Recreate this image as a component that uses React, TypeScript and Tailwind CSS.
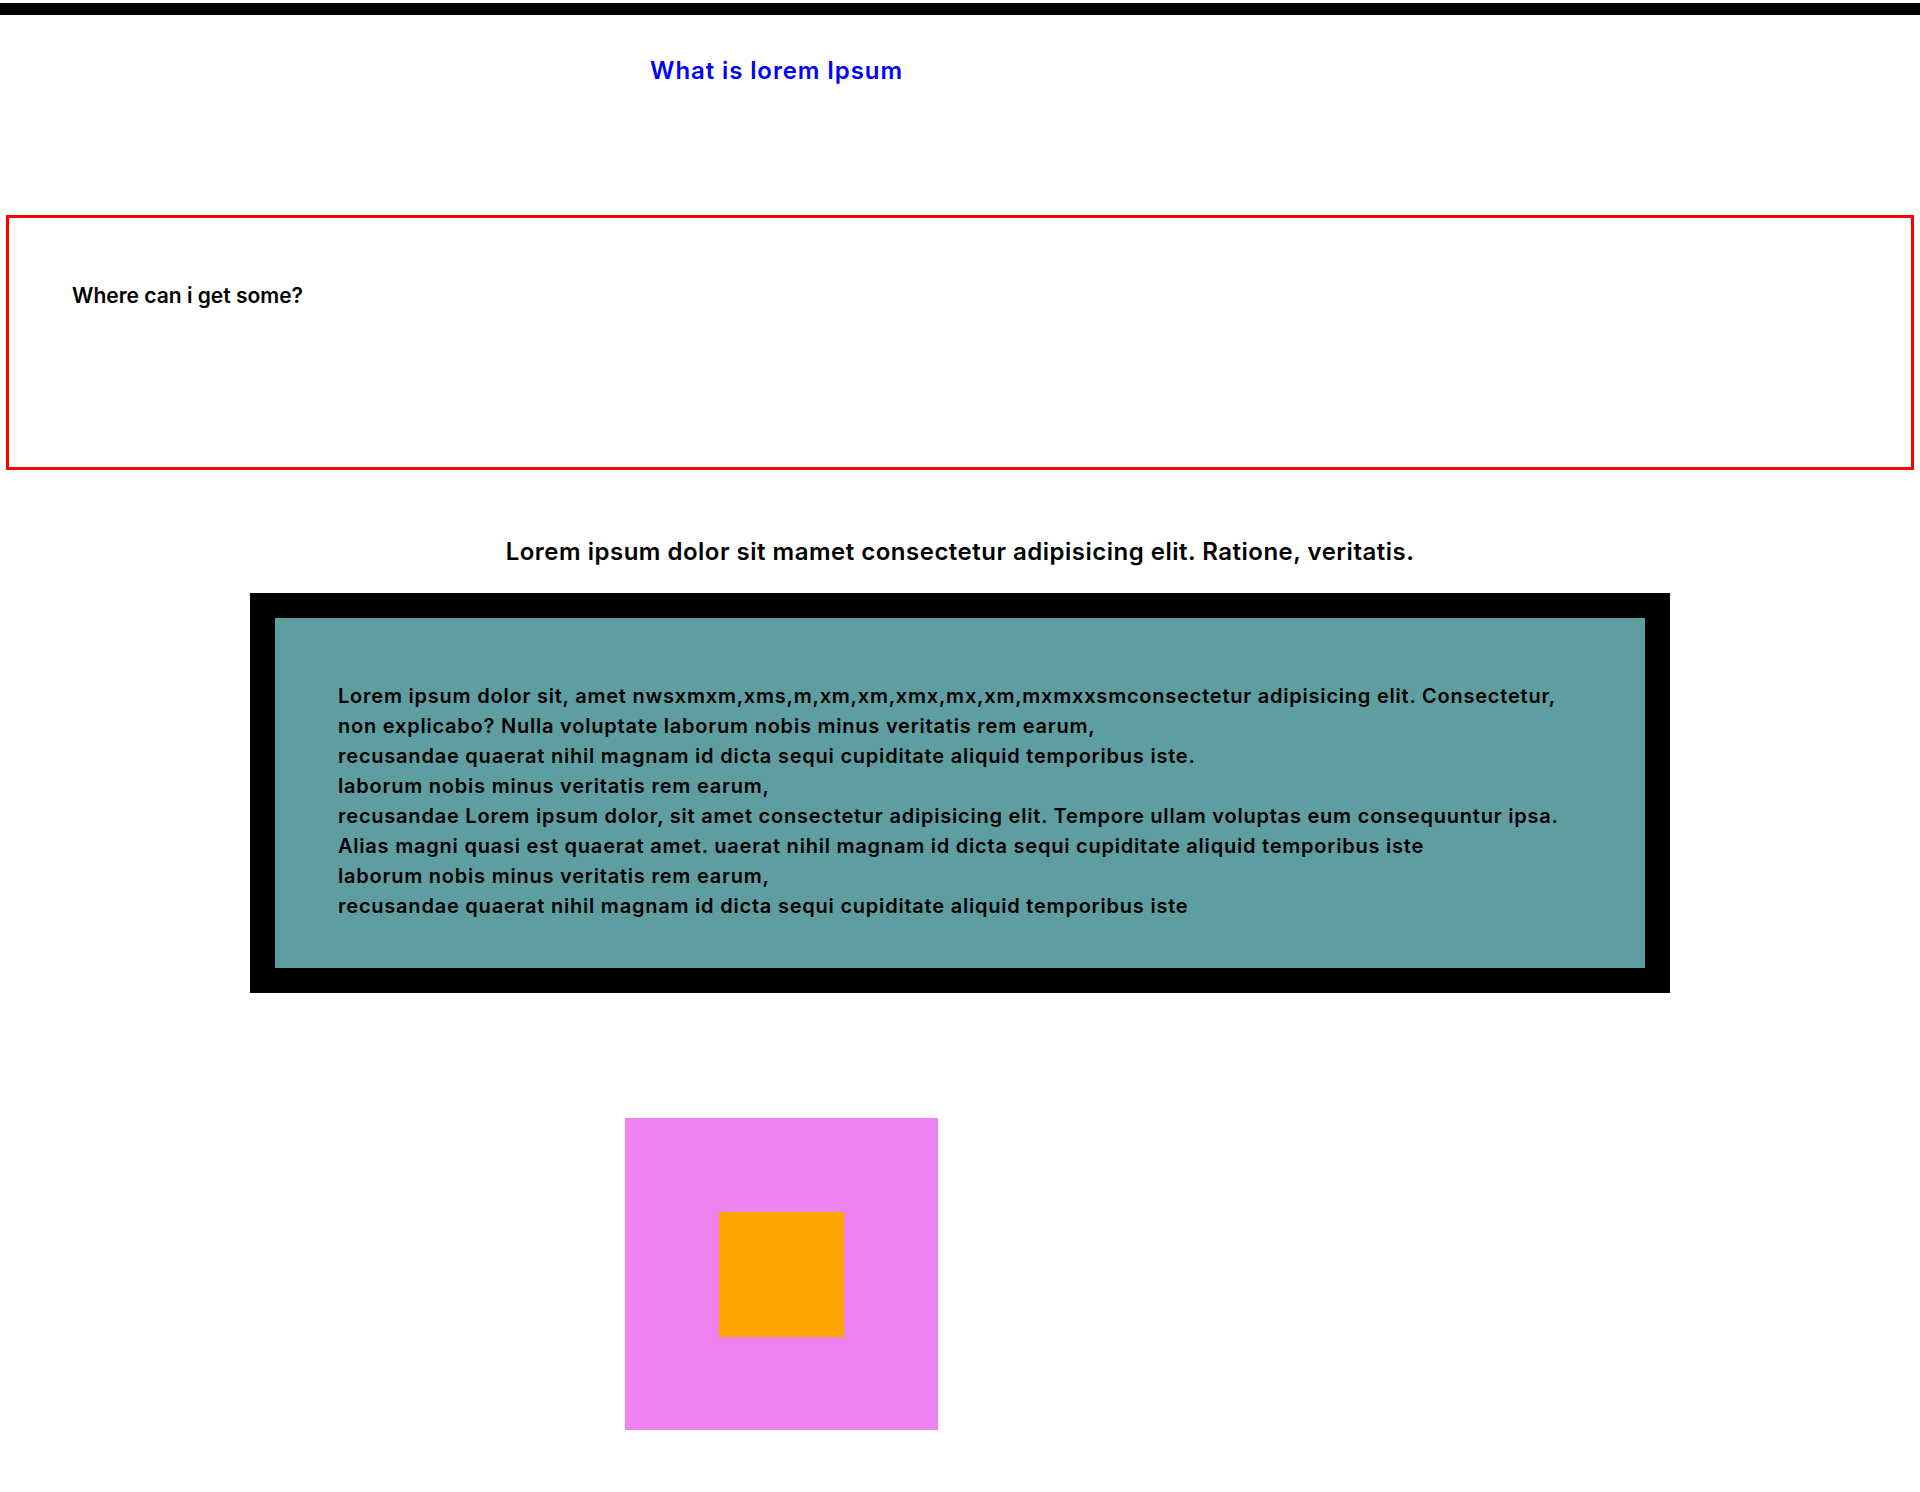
import React from "react";

export default function App() {
  return (
    <div className="min-h-[1492px] w-[1920px] bg-white font-['Inter',sans-serif] text-black">
      <div className="pt-[3px]">
        <div className="h-[12px] bg-black" />
      </div>
      <h1 className="mt-[38px] pl-[650px] text-[24px] leading-[36px] font-semibold tracking-[0.9px] text-[#0000ff]">
        What is lorem Ipsum
      </h1>
      <section className="mx-[6px] mt-[126px] h-[255px] border-[3px] border-[#ff0000] pl-[63px] pt-[63px]">
        <h3 className="text-[21px] leading-[30px] font-semibold">Where can i get some?</h3>
      </section>
      <h2 className="mt-[65px] text-center text-[24px] leading-[34px] font-semibold tracking-[0.5px]">
        Lorem ipsum dolor sit mamet consectetur adipisicing elit. Ratione, veritatis.
      </h2>
      <div className="ml-[250px] mt-[24px] h-[400px] w-[1420px] border-[25px] border-black bg-[#5f9ea0] pl-[63px] pt-[63px]">
        <p className="whitespace-nowrap text-[20px] leading-[30px] font-semibold tracking-[0.78px]">
          Lorem ipsum dolor sit, amet nwsxmxm,xms,m,xm,xm,xmx,mx,xm,mxmxxsmconsectetur adipisicing elit. Consectetur,
          <br />
          non explicabo? Nulla voluptate laborum nobis minus veritatis rem earum,
          <br />
          recusandae quaerat nihil magnam id dicta sequi cupiditate aliquid temporibus iste.
          <br />
          laborum nobis minus veritatis rem earum,
          <br />
          recusandae Lorem ipsum dolor, sit amet consectetur adipisicing elit. Tempore ullam voluptas eum consequuntur ipsa.
          <br />
          Alias magni quasi est quaerat amet. uaerat nihil magnam id dicta sequi cupiditate aliquid temporibus iste
          <br />
          laborum nobis minus veritatis rem earum,
          <br />
          recusandae quaerat nihil magnam id dicta sequi cupiditate aliquid temporibus iste
        </p>
      </div>
      <div className="ml-[625px] mt-[125px] h-[312px] w-[313px] bg-[#ee82ee] pl-[94px] pt-[94px]">
        <div className="h-[125px] w-[125px] bg-[#ffa500]" />
      </div>
    </div>
  );
}
